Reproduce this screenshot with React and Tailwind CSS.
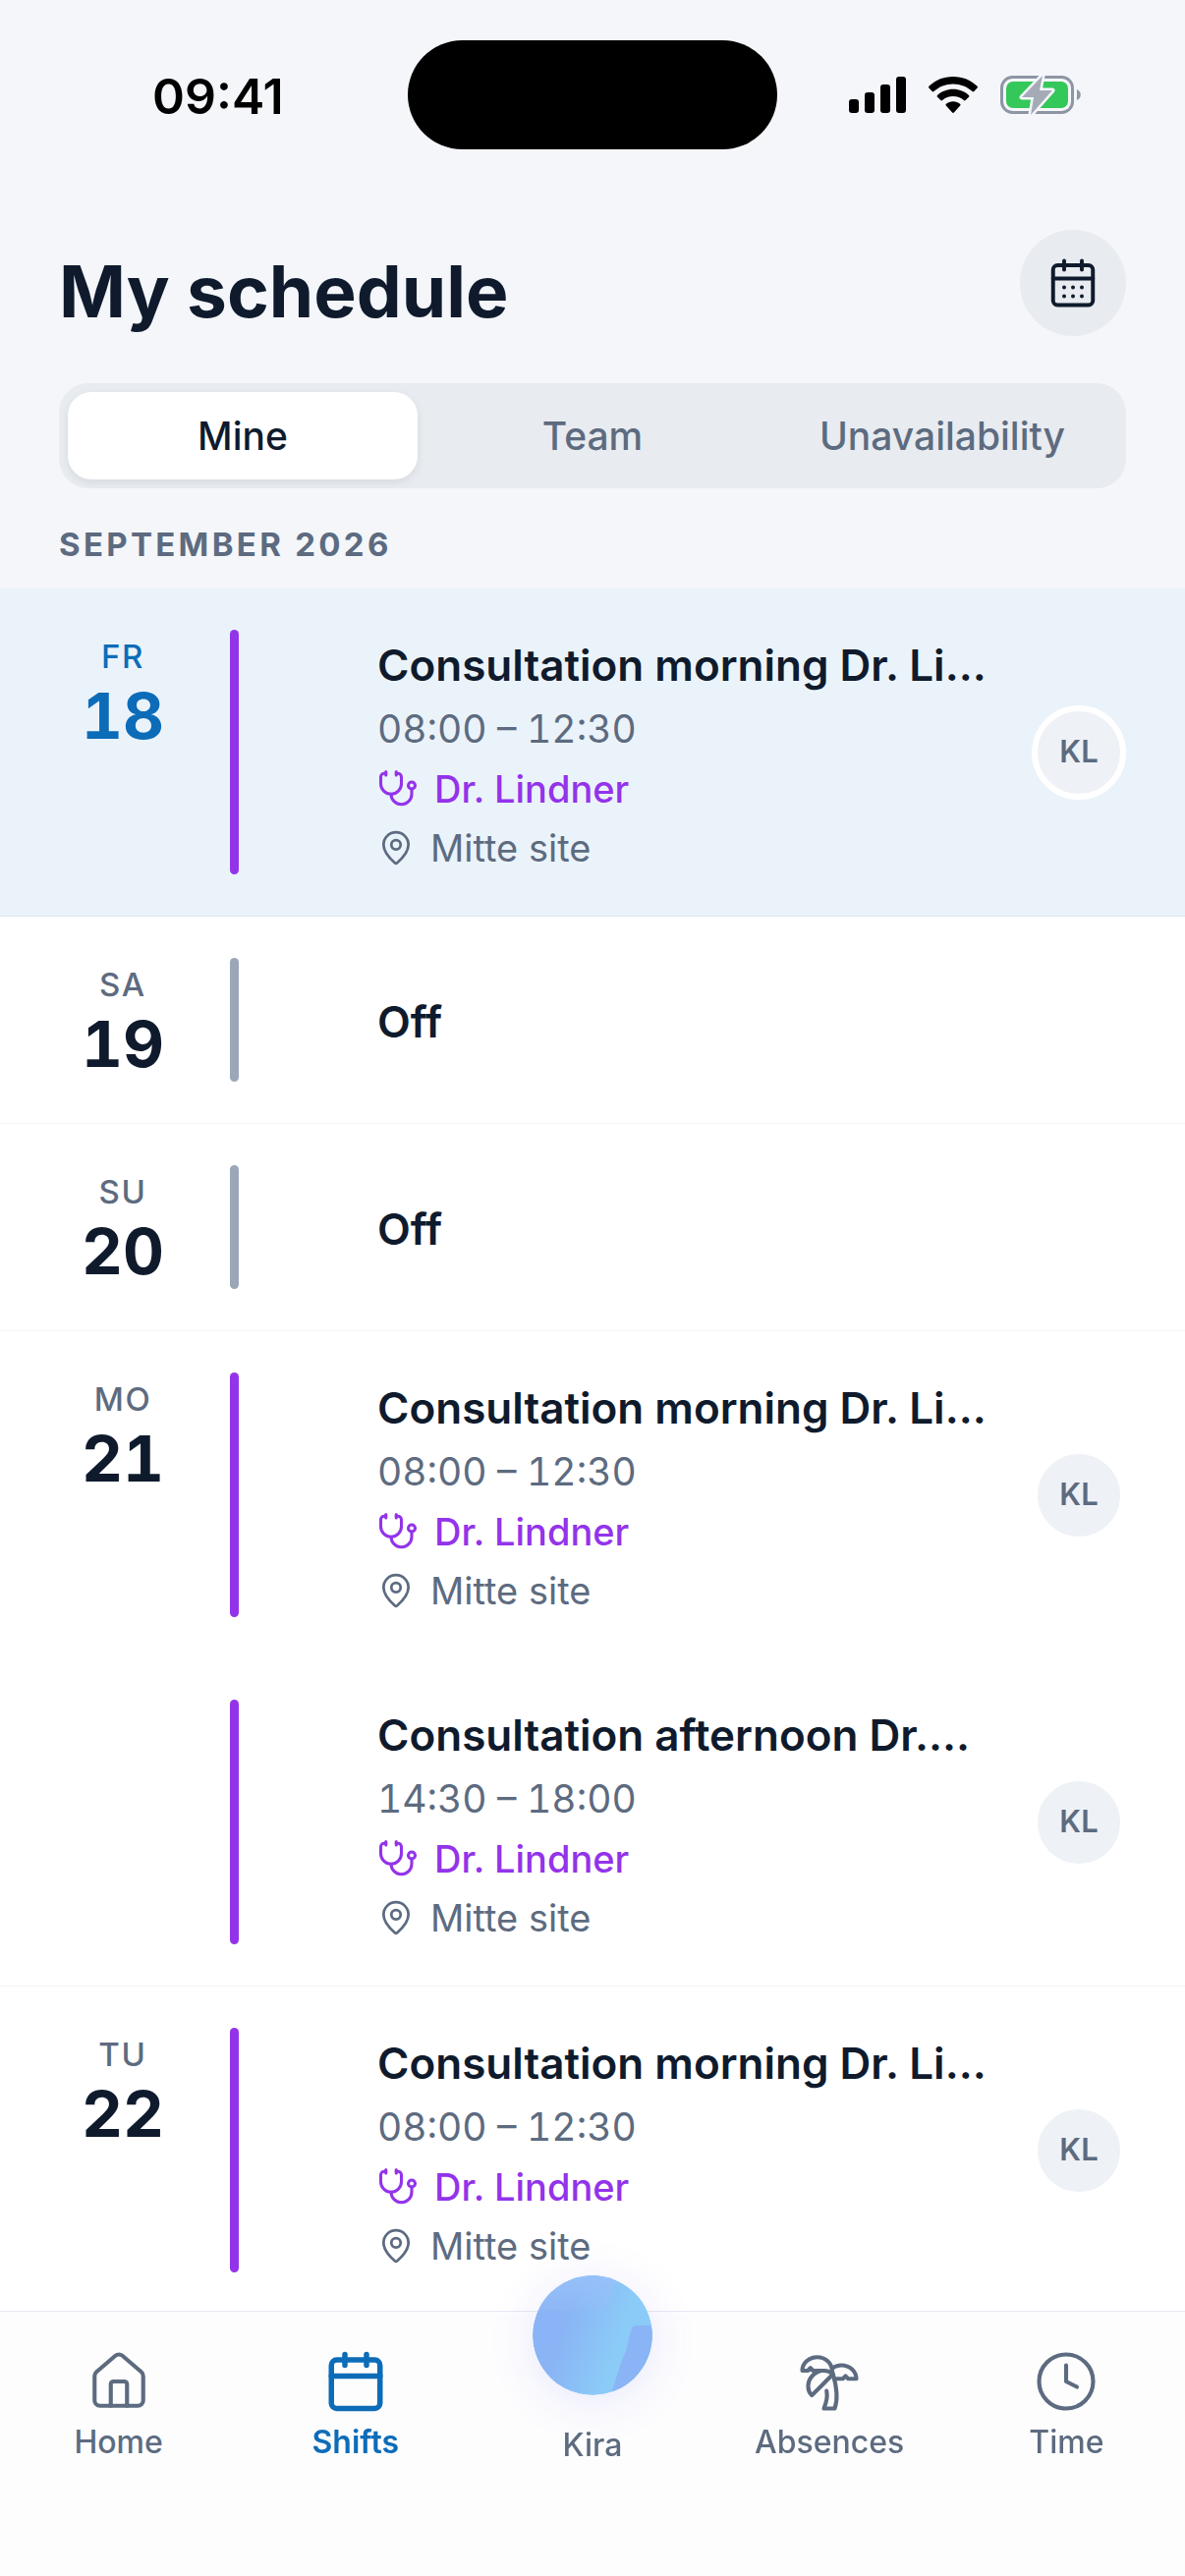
import { Stethoscope, MapPin, House, Calendar, CalendarDays, TreePalm, Clock } from 'lucide-react';

const days = [
  {
    weekday: 'FR',
    date: 18,
    today: true,
    shifts: [
      { title: 'Consultation morning Dr. Li…', time: '08:00 – 12:30', doctor: 'Dr. Lindner', site: 'Mitte site', initials: 'KL' },
    ],
  },
  { weekday: 'SA', date: 19, shifts: [] },
  { weekday: 'SU', date: 20, shifts: [] },
  {
    weekday: 'MO',
    date: 21,
    shifts: [
      { title: 'Consultation morning Dr. Li…', time: '08:00 – 12:30', doctor: 'Dr. Lindner', site: 'Mitte site', initials: 'KL' },
      { title: 'Consultation afternoon Dr.…', time: '14:30 – 18:00', doctor: 'Dr. Lindner', site: 'Mitte site', initials: 'KL' },
    ],
  },
  {
    weekday: 'TU',
    date: 22,
    shifts: [
      { title: 'Consultation morning Dr. Li…', time: '08:00 – 12:30', doctor: 'Dr. Lindner', site: 'Mitte site', initials: 'KL' },
    ],
  },
];

const StatusBar = () => (
  <div className="grid grid-cols-[1fr_376px_1fr] items-center pt-[41px]">
    <time className="pt-0.5 pl-[155px] text-[50px] leading-none font-semibold text-black">09:41</time>
    <div className="h-[111px] rounded-full bg-black" />
    <div className="flex items-center justify-end gap-[23px] pr-[106px]">
      <svg className="h-[38px] w-[58px]" viewBox="0 0 58 38" aria-label="Signal">
        <rect x="0" y="23" width="10" height="14" rx="3" />
        <rect x="16" y="16" width="10" height="21" rx="3" />
        <rect x="32" y="8" width="10" height="29" rx="3" />
        <rect x="48" y="0" width="10" height="37" rx="3" />
      </svg>
      <svg className="h-[38px] w-[50px]" viewBox="0 0 50 38" aria-label="Wi-Fi">
        <path d="M25 0C15.300 0 6.600 3.700.4 9.800c-.5.500-.5 1.200 0 1.700l3.300 3.500c.5.500 1.200.5 1.700 0C10.600 10.200 17.500 7.400 25 7.400s14.400 2.800 19.600 7.600c.5.500 1.200.5 1.700 0l3.300-3.500c.5-.5.500-1.200 0-1.700C43.400 3.700 34.700 0 25 0z" />
        <path d="M25 12.700c-6.200 0-11.800 2.300-16 6.200-.5.500-.5 1.300 0 1.800l3.400 3.400c.4.400 1.200.5 1.700 0 2.900-2.600 6.700-4.100 10.900-4.100s8 1.500 10.900 4.100c.5.500 1.300.4 1.700 0l3.400-3.400c.5-.5.500-1.300 0-1.800-4.200-3.900-9.800-6.200-16-6.200z" />
        <path d="M25 25.300c-2.700 0-5.200 1-7.100 2.500-.5.500-.6 1.200-.1 1.700l6.300 7c.5.600 1.300.6 1.800 0l6.300-7c.5-.5.400-1.200-.1-1.700-1.900-1.500-4.400-2.500-7.100-2.500z" />
      </svg>
      <svg className="h-[42px] w-[82px]" viewBox="0 0 82 42" aria-label="Battery">
        <rect x="1.500" y="2.500" width="72" height="36" rx="11" fill="none" stroke="#8e95a3" strokeWidth="3" />
        <rect x="6" y="7" width="63" height="27" rx="7" fill="#34c759" />
        <path d="M78 15c5 2 5 9 0 11z" fill="#8e95a3" />
        <path d="M43 1 22 23h12l-3 18 22-25H40z" fill="#a5abb6" stroke="#f4f6fa" strokeWidth="5" strokeLinejoin="round" paintOrder="stroke" />
      </svg>
    </div>
  </div>
);

const ViewTabs = () => {
  const tabs = ['Mine', 'Team', 'Unavailability'];
  return (
    <div role="tablist" className="grid grid-cols-3 rounded-[30px] bg-[#e8ebef] p-[9px]">
      {tabs.map((tab, i) => (
        <button
          key={tab}
          role="tab"
          aria-selected={i === 0}
          className={`h-[89px] rounded-3xl pt-0.5 text-[39px] font-medium ${i === 0 ? 'bg-white text-[#0f1b2d] shadow-[0_3px_9px_rgba(15,27,45,0.08)]' : 'text-[#5d6b80]'}`}
        >
          {tab}
        </button>
      ))}
    </div>
  );
};

const ShiftDetails = ({ shift }) => (
  <>
    <div className="min-w-0 flex-1 pt-1">
      <h3 className="truncate text-[44px] leading-[68px] font-semibold text-[#0f1b2d]">{shift.title}</h3>
      <p className="text-[39px] leading-[62px] text-[#5d6b80] tabular-nums">{shift.time}</p>
      <p className="flex items-center gap-4 text-[38px] leading-[60px] font-medium text-[#9333ea]">
        <Stethoscope size={42} strokeWidth={1.75} />
        {shift.doctor}
      </p>
      <p className="flex items-center gap-4 text-[38px] leading-[60px] text-[#5d6b80]">
        <MapPin size={38} strokeWidth={1.75} />
        {shift.site}
      </p>
    </div>
    <div className="flex size-24 shrink-0 items-center justify-center rounded-full border-[6px] border-white bg-[#eef1f6] text-[31px] font-semibold text-[#5d6b80]">
      {shift.initials}
    </div>
  </>
);

const DayGroup = ({ day }) => {
  const rows = day.shifts.length ? day.shifts : [null];
  return (
    <section className={`border-b ${day.today ? 'border-[#dfe6ee] bg-[#ebf3fa]' : 'border-[#f1f4f8] bg-white'}`}>
      {rows.map((shift, i) => (
        <div key={i} className="flex px-[60px] py-[42px]">
          <div className={`w-[130px] shrink-0 text-center ${day.today ? 'text-[#0d6cb8]' : 'text-[#0f1b2d]'}`}>
            {i === 0 && (
              <>
                <p className={`text-[33px] leading-[54px] font-medium tracking-wider ${day.today ? '' : 'text-[#5d6b80]'}`}>{day.weekday}</p>
                <p className="text-[65px] leading-[68px] font-bold tabular-nums">{day.date}</p>
              </>
            )}
          </div>
          <div className={`ml-11 w-[9px] shrink-0 rounded-full ${shift ? 'bg-[#9333ea]' : 'bg-[#9ba7b8]'}`} />
          <div className={`ml-[141px] flex min-w-0 flex-1 items-center ${shift ? 'h-[249px]' : 'h-[126px]'}`}>
            {shift ? <ShiftDetails shift={shift} /> : <h3 className="pt-1 text-[44px] font-semibold text-[#0f1b2d]">Off</h3>}
          </div>
        </div>
      ))}
    </section>
  );
};

const TabItem = ({ icon: Icon, label, active }) => (
  <a
    href="#"
    aria-current={active ? 'page' : undefined}
    className={`flex flex-col items-center text-[32px] leading-[50px] ${active ? 'font-semibold text-[#0d6cb8]' : 'font-medium text-[#5d6b80]'}`}
  >
    <Icon size={66} strokeWidth={active ? 2 : 1.5} className="mb-1" />
    {label}
  </a>
);

const TabBar = () => (
  <nav className="fixed inset-x-0 bottom-0 grid h-[270px] grid-cols-5 border-t border-[#e5e9f0] bg-[#fdfdfe] pt-[38px]">
    <TabItem icon={House} label="Home" />
    <TabItem icon={Calendar} label="Shifts" active />
    <a href="#" className="-mt-[75px] flex flex-col items-center text-[32px] leading-[50px] font-medium text-[#5d6b80]">
      <svg className="mb-[26px] size-[122px] rounded-full shadow-[0_6px_48px_rgba(99,102,241,0.14)]" viewBox="0 0 122 122">
        <defs>
          <linearGradient id="orb" x1="0" y1="0.3" x2="0.9" y2="0.6">
            <stop offset="0.3" stopColor="#8ab4f5" />
            <stop offset="0.8" stopColor="#8bcbf7" />
          </linearGradient>
          <linearGradient id="orbTop" x1="0" y1="0" x2="0" y2="1">
            <stop offset="0" stopColor="#97c0f9" />
            <stop offset="1" stopColor="#97c0f9" stopOpacity="0.2" />
          </linearGradient>
          <clipPath id="orbClip">
            <circle cx="61" cy="61" r="61" />
          </clipPath>
        </defs>
        <g clipPath="url(#orbClip)">
          <rect width="122" height="122" fill="url(#orb)" />
          <path d="M0 0h86q-4 20-14 36H0z" fill="url(#orbTop)" />
          <path d="M105 51h14q3 0 3 6v65H79C85 108 88 92 95 77c3-9 4-26 10-26z" fill="#8ab4f5" />
        </g>
      </svg>
      Kira
    </a>
    <TabItem icon={TreePalm} label="Absences" />
    <TabItem icon={Clock} label="Time" />
  </nav>
);

const App = () => (
  <div className="min-h-screen bg-[#f4f6fa] pb-[268px] font-['Inter',sans-serif]">
    <StatusBar />
    <header className="flex items-start justify-between px-[60px] pt-[82px]">
      <h1 className="pt-[15px] text-[73px] leading-[96px] font-bold text-[#0f1b2d]">My schedule</h1>
      <button aria-label="Open calendar" className="flex size-[108px] items-center justify-center rounded-full bg-[#e8ebef] text-[#0f1b2d]">
        <CalendarDays size={54} strokeWidth={1.75} />
      </button>
    </header>
    <main>
      <div className="px-[60px] pt-[45px]">
        <ViewTabs />
        <h2 className="pt-[33px] pb-[21px] text-[33px] leading-[48px] font-bold tracking-widest text-[#5d6b80]">SEPTEMBER 2026</h2>
      </div>
      {days.map((day) => (
        <DayGroup key={day.date} day={day} />
      ))}
    </main>
    <TabBar />
  </div>
);

export default App;
